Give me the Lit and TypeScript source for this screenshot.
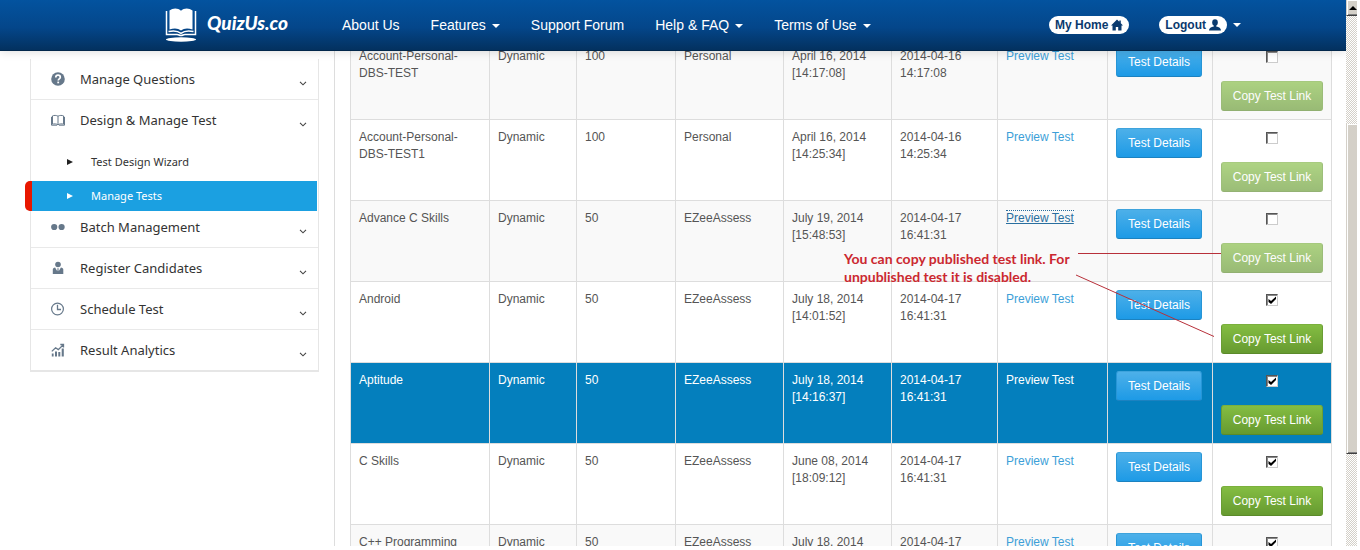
import { LitElement, html, css, svg, nothing } from "lit";
import { customElement } from "lit/decorators.js";
import { classMap } from "lit/directives/class-map.js";

interface TestRow {
  name: string;
  questions: number;
  category: string;
  created: string;
  createdTime: string;
  updated: string;
  updatedTime: string;
  published: boolean;
  focused?: boolean;
  selected?: boolean;
}

const ROWS: TestRow[] = [
  { name: "Account-Personal-DBS-TEST", questions: 100, category: "Personal", created: "April 16, 2014", createdTime: "[14:17:08]", updated: "2014-04-16", updatedTime: "14:17:08", published: false },
  { name: "Account-Personal-DBS-TEST1", questions: 100, category: "Personal", created: "April 16, 2014", createdTime: "[14:25:34]", updated: "2014-04-16", updatedTime: "14:25:34", published: false },
  { name: "Advance C Skills", questions: 50, category: "EZeeAssess", created: "July 19, 2014", createdTime: "[15:48:53]", updated: "2014-04-17", updatedTime: "16:41:31", published: false, focused: true },
  { name: "Android", questions: 50, category: "EZeeAssess", created: "July 18, 2014", createdTime: "[14:01:52]", updated: "2014-04-17", updatedTime: "16:41:31", published: true },
  { name: "Aptitude", questions: 50, category: "EZeeAssess", created: "July 18, 2014", createdTime: "[14:16:37]", updated: "2014-04-17", updatedTime: "16:41:31", published: true, selected: true },
  { name: "C Skills", questions: 50, category: "EZeeAssess", created: "June 08, 2014", createdTime: "[18:09:12]", updated: "2014-04-17", updatedTime: "16:41:31", published: true },
  { name: "C++ Programming", questions: 50, category: "EZeeAssess", created: "July 18, 2014", createdTime: "", updated: "2014-04-17", updatedTime: "", published: true },
];

const NAV = [
  { label: "About Us", menu: false },
  { label: "Features", menu: true },
  { label: "Support Forum", menu: false },
  { label: "Help & FAQ", menu: true },
  { label: "Terms of Use", menu: true },
];

const ICONS: Record<string, unknown> = {
  question: svg`<circle cx="7" cy="7" r="6.8" fill="currentColor"/><path d="M4.8 5.4C4.8 4 5.7 3.2 7 3.2s2.3.8 2.3 2c0 1.6-2.1 1.7-2.1 3.3" fill="none" stroke="#fff" stroke-width="1.7"/><rect x="6.3" y="9.6" width="1.8" height="1.7" fill="#fff"/>`,
  book: svg`<path d="M7 3.2v8.6M7 3.2C5.4 2.2 2.9 2.2 1.5 2.9v8.3c1.5-.5 4-.5 5.5.6 1.5-1.1 4-1.1 5.5-.6V2.9C11.1 2.2 8.600 2.200 7 3.200M.5 3.800v8.400h5.500M13.500 3.800v8.400H8" fill="none" stroke="currentColor" stroke-width="1"/>`,
  dots: svg`<circle cx="3.200" cy="7" r="3.100" fill="currentColor"/><circle cx="10.600" cy="7" r="3.100" fill="currentColor"/>`,
  user: svg`<circle cx="7" cy="3.500" r="2.800" fill="currentColor"/><path d="M1.800 12.900V8.600c0-1.300.9-2 2.300-2.200l2.200 3.800.3-3.200h.8l.3 3.200 2.200-3.800c1.500.2 2.400.9 2.400 2.200v4.300z" fill="currentColor"/>`,
  clock: svg`<circle cx="6.500" cy="7" r="5.900" fill="none" stroke="currentColor" stroke-width="1.200"/><path d="M6.500 2.800V7.500H10" fill="none" stroke="currentColor" stroke-width="1.300"/>`,
  chart: svg`<path d="M.8 10.500h1.800v3H.8zM4 8.500h2v5H4zM7.300 9h2v4.500h-2zM10.700 5.500h2.100v8h-2.100z" fill="currentColor"/><path d="M.8 8.400 4.600 4.800 7.300 6.600 12 2M9.300 1.500h3.200v3" fill="none" stroke="currentColor" stroke-width="1.300"/>`,
};

@customElement("site-header")
export class SiteHeader extends LitElement {
  static styles = css`
    :host {
      display: flex;
      align-items: center;
      box-sizing: border-box;
      height: 51px;
      padding: 0 105px 0 165px;
      background: linear-gradient(#03539f, #04468a 55%, #03315f);
      border-bottom: 1px solid #02274b;
      box-shadow: 0 1px 9px rgba(0, 0, 0, 0.13);
      font: 14px/20px "Liberation Sans", Arial, sans-serif;
    }
    a { color: #fff; text-decoration: none; white-space: nowrap; }
    .brand {
      display: flex;
      align-items: center;
      gap: 10px;
      font: italic 900 19px/24px Lato, sans-serif;
    }
    .mark { display: block; width: 32px; height: 36px; }
    .title { padding-bottom: 4px; }
    .nav { display: flex; flex: 1; gap: 31px; margin-left: 54px; }
    .account { display: flex; align-items: center; gap: 30px; }
    .entry { display: flex; align-items: center; gap: 6px; }
    .caret {
      display: inline-block;
      margin-left: 6px;
      border: 4px solid transparent;
      border-top-color: #fff;
      border-bottom: 0;
      vertical-align: middle;
    }
    .entry .caret { margin-left: 0; }
    .pill {
      display: flex;
      align-items: center;
      gap: 3px;
      padding: 0 6px;
      border-radius: 9px;
      background: #fff;
      color: #0a3a6e;
      font-size: 12px;
      font-weight: bold;
      line-height: 18px;
    }
    .glyph { display: block; width: 12px; height: 12px; }
  `;

  render() {
    return html`
      <a class="brand" href="#">
        <svg class="mark" viewBox="0 0 32 36" aria-hidden="true">
          <path d="M4.500 3.500C8 .8 13 .8 16 3.800 19 .8 24 .8 27.500 3.500V22.500C23 20.800 19 21 16 23.500 13 21 9 20.800 4.500 22.500Z" fill="#fff"/>
          <path d="M1.500 4V27.500H12C14 27.500 14 28.500 16 28.500S18 27.500 20 27.500H30.500V4M3.500 24.500C8 23.500 12.500 23.500 16 26.300 19.500 23.500 24 23.500 28.500 24.500" fill="none" stroke="#fff" stroke-width="1.500"/>
          <ellipse cx="16" cy="32.500" rx="15" ry="2.200" fill="#fff"/>
        </svg>
        <span class="title">QuizUs.co</span>
      </a>
      <nav class="nav">
        ${NAV.map((n) => html`<a href="#">${n.label}${n.menu ? html`<span class="caret"></span>` : nothing}</a>`)}
      </nav>
      <div class="account">
        <a class="pill" href="#">My Home
          <svg class="glyph" viewBox="0 0 12 12" aria-hidden="true"><path d="M6 .5 0 6.600h1.500V11.500h3.300V8h2.400v3.500h3.300V6.600H12L9.800 4.300V1.500H8.300v1.300Z" fill="currentColor"/></svg>
        </a>
        <a class="entry" href="#">
          <span class="pill">Logout
            <svg class="glyph" viewBox="0 0 12 12" aria-hidden="true"><ellipse cx="6" cy="3.400" rx="2.800" ry="3.200" fill="currentColor"/><path d="M4.800 6h2.400v1.400c2.800.6 4.800 1.500 4.800 4.100H0C0 8.900 2 8 4.800 7.400Z" fill="currentColor"/></svg>
          </span>
          <span class="caret"></span>
        </a>
      </div>
    `;
  }
}

@customElement("side-menu")
export class SideMenu extends LitElement {
  static styles = css`
    :host {
      display: block;
      box-sizing: border-box;
      border: 1px solid #e6e6e6;
      border-top: 0;
      border-bottom-width: 2px;
      font: 13px/20px "Noto Sans", "Open Sans", sans-serif;
    }
    a { color: #333; text-decoration: none; }
    .item {
      display: flex;
      align-items: center;
      gap: 15px;
      height: 40px;
      padding: 0 11px 0 20px;
    }
    .item:not(:first-child) { border-top: 1px solid #e9e9e9; }
    .sub + .item { border-top-color: transparent; }
    .icon { width: 14px; height: 14px; color: #66788a; }
    .label { flex: 1; }
    .chevron { width: 8px; height: 5px; margin-top: 8px; }
    .sub {
      display: grid;
      gap: 4px;
      margin-bottom: -5px;
      padding-top: 7px;
      font-size: 11px;
    }
    .link { display: flex; align-items: center; gap: 18px; height: 30px; padding-left: 36px; }
    .arrow { border: 3px solid transparent; border-left: 6px solid #222; border-right: 0; }
    .active {
      margin: 0 1px 0 -6px;
      padding-left: 35px;
      border-left: 7px solid #e81700;
      border-radius: 5px 0 0 5px;
      background: #1ba0e1;
      color: #fff;
    }
    .active .arrow { border-left-color: #fff; }
  `;

  item(icon: string, label: string) {
    return html`<a class="item" href="#">
      <svg class="icon" viewBox="0 0 14 14" aria-hidden="true">${ICONS[icon]}</svg>
      <span class="label">${label}</span>
      <svg class="chevron" viewBox="0 0 8 5" aria-hidden="true"><path d="M1 .8 4 3.800 7 .8" fill="none" stroke="#444" stroke-width="1.100"/></svg>
    </a>`;
  }

  render() {
    return html`
      ${this.item("question", "Manage Questions")}
      ${this.item("book", "Design & Manage Test")}
      <div class="sub">
        <a class="link" href="#"><span class="arrow"></span>Test Design Wizard</a>
        <a class="link active" href="#"><span class="arrow"></span>Manage Tests</a>
      </div>
      ${this.item("dots", "Batch Management")}
      ${this.item("user", "Register Candidates")}
      ${this.item("clock", "Schedule Test")}
      ${this.item("chart", "Result Analytics")}
    `;
  }
}

@customElement("test-table")
export class TestTable extends LitElement {
  static styles = css`
    :host {
      display: block;
      position: relative;
      font: 12px/17px "Liberation Sans", Arial, sans-serif;
      color: #555;
    }
    table { width: 100%; table-layout: fixed; border-collapse: collapse; }
    .c-name { width: 139px; }
    .c-type { width: 87px; }
    .c-count { width: 99px; }
    .c-category { width: 108px; }
    .c-created { width: 108px; }
    .c-updated { width: 106px; }
    .c-preview { width: 110px; }
    .c-details { width: 105px; }
    .c-publish { width: 119px; }
    td { padding: 9px 8px 8px; border: 1px solid #ddd; vertical-align: top; }
    .action { padding: 8px; }
    tr:nth-child(odd) { background: #f9f9f9; }
    .selected, tr.selected:nth-child(odd) { background: #047fbd; color: #fff; }
    .preview { color: #3d9fd8; text-decoration: none; }
    .selected .preview { color: #fff; }
    .focused { color: #2a6f9f; text-decoration: underline; border-top: 1px dotted #2a6f9f; }
    button {
      height: 30px;
      padding: 0 11px;
      border: 1px solid;
      border-radius: 3px;
      color: #fff;
      font: inherit;
      white-space: nowrap;
    }
    .details {
      background: linear-gradient(#4db0e9, #1d9ae6);
      border-color: #3ea3dc #2795d6 #1c82c0;
    }
    .copy {
      background: linear-gradient(#84bd42, #669a30);
      border-color: #7bb03d #6a9d34 #5b8a2a;
    }
    .copy:disabled { opacity: 0.65; }
    .publish { display: flex; flex-direction: column; align-items: center; }
    .tick {
      display: grid;
      place-items: center;
      appearance: none;
      box-sizing: border-box;
      width: 12px;
      height: 12px;
      margin: 4px 0 18px;
      border: 1px solid;
      border-color: #555 #ccc #ccc #555;
      background: #fff;
      box-shadow: inset 1px 1px 0 #888;
    }
    .tick:checked::before {
      content: "";
      width: 8px;
      height: 8px;
      background: #000;
      clip-path: polygon(6% 38%, 38% 62%, 100% 6%, 100% 38%, 38% 100%, 6% 74%);
    }
    .note {
      position: absolute;
      right: 110px;
      top: 212px;
      display: flex;
      color: #cb2830;
    }
    .text { width: 234px; font: bold 14px/18px Lato, sans-serif; white-space: nowrap; }
    .text p { margin: 0; }
    .lines { width: 144px; height: 90px; overflow: visible; }
  `;

  render() {
    const cols = ["name", "type", "count", "category", "created", "updated", "preview", "details", "publish"];
    return html`
      <table>
        <colgroup>${cols.map((c) => html`<col class="c-${c}" />`)}</colgroup>
        <tbody>
          ${ROWS.map(
            (r) => html`<tr class=${classMap({ selected: !!r.selected })}>
              <td>${r.name}</td>
              <td>Dynamic</td>
              <td>${r.questions}</td>
              <td>${r.category}</td>
              <td>${r.created}<br />${r.createdTime}</td>
              <td>${r.updated}<br />${r.updatedTime}</td>
              <td><a class=${classMap({ preview: true, focused: !!r.focused })} href="#">Preview Test</a></td>
              <td class="action"><button class="details" type="button">Test Details</button></td>
              <td class="action">
                <div class="publish">
                  <input class="tick" type="checkbox" aria-label="Published: ${r.name}" .checked=${r.published} />
                  <button class="copy" type="button" ?disabled=${!r.published}>Copy Test Link</button>
                </div>
              </td>
            </tr>`
          )}
        </tbody>
      </table>
      <div class="note">
        <div class="text">
          <p>You can copy published test link. For</p>
          <p>unpublished test it is disabled.</p>
        </div>
        <svg class="lines" viewBox="0 0 144 90" aria-hidden="true">
          <path d="M0 3.500H143M-2 25 136 86.500" fill="none" stroke="#b8303a" stroke-width="1"/>
        </svg>
      </div>
    `;
  }
}

@customElement("app-root")
export class AppRoot extends LitElement {
  static styles = css`
    :host {
      display: flex;
      box-sizing: border-box;
      height: 100vh;
      padding: 0 3px 4px 0;
      background: #fff;
    }
    .page { position: relative; flex: 1; min-width: 0; overflow: hidden; }
    .top { position: absolute; inset: 0 0 auto; z-index: 2; }
    .body { display: flex; gap: 15px; height: 100%; }
    .side { flex: none; width: 289px; padding: 59px 0 0 30px; }
    .main {
      flex: 1;
      min-width: 0;
      padding: 38px 14px 0 15px;
      border-left: 1px solid #ddd;
    }
    .scroll {
      display: grid;
      grid-template-rows: 16px 108px 330px 1fr;
      width: 11px;
      overflow: hidden;
      background: repeating-conic-gradient(#d4d0c8 0 25%, #fff 0 50%) 0 0 / 2px 2px;
    }
    .up, .thumb {
      box-sizing: border-box;
      border-left: 1px solid #d4d0c8;
      border-bottom: 1px solid #404040;
      background: #d4d0c8;
      box-shadow: inset 1px 1px 0 #fff, inset 0 -1px 0 #808080;
    }
    .thumb { grid-row: 3; }
    .up { display: grid; place-items: center end; }
    .tri { border: 4px solid transparent; border-top: 0; border-bottom-color: #000; }
  `;

  render() {
    return html`
      <div class="page">
        <site-header class="top"></site-header>
        <div class="body">
          <aside class="side"><side-menu></side-menu></aside>
          <main class="main"><test-table></test-table></main>
        </div>
      </div>
      <div class="scroll" aria-hidden="true">
        <div class="up"><div class="tri"></div></div>
        <div class="thumb"></div>
      </div>
    `;
  }
}
